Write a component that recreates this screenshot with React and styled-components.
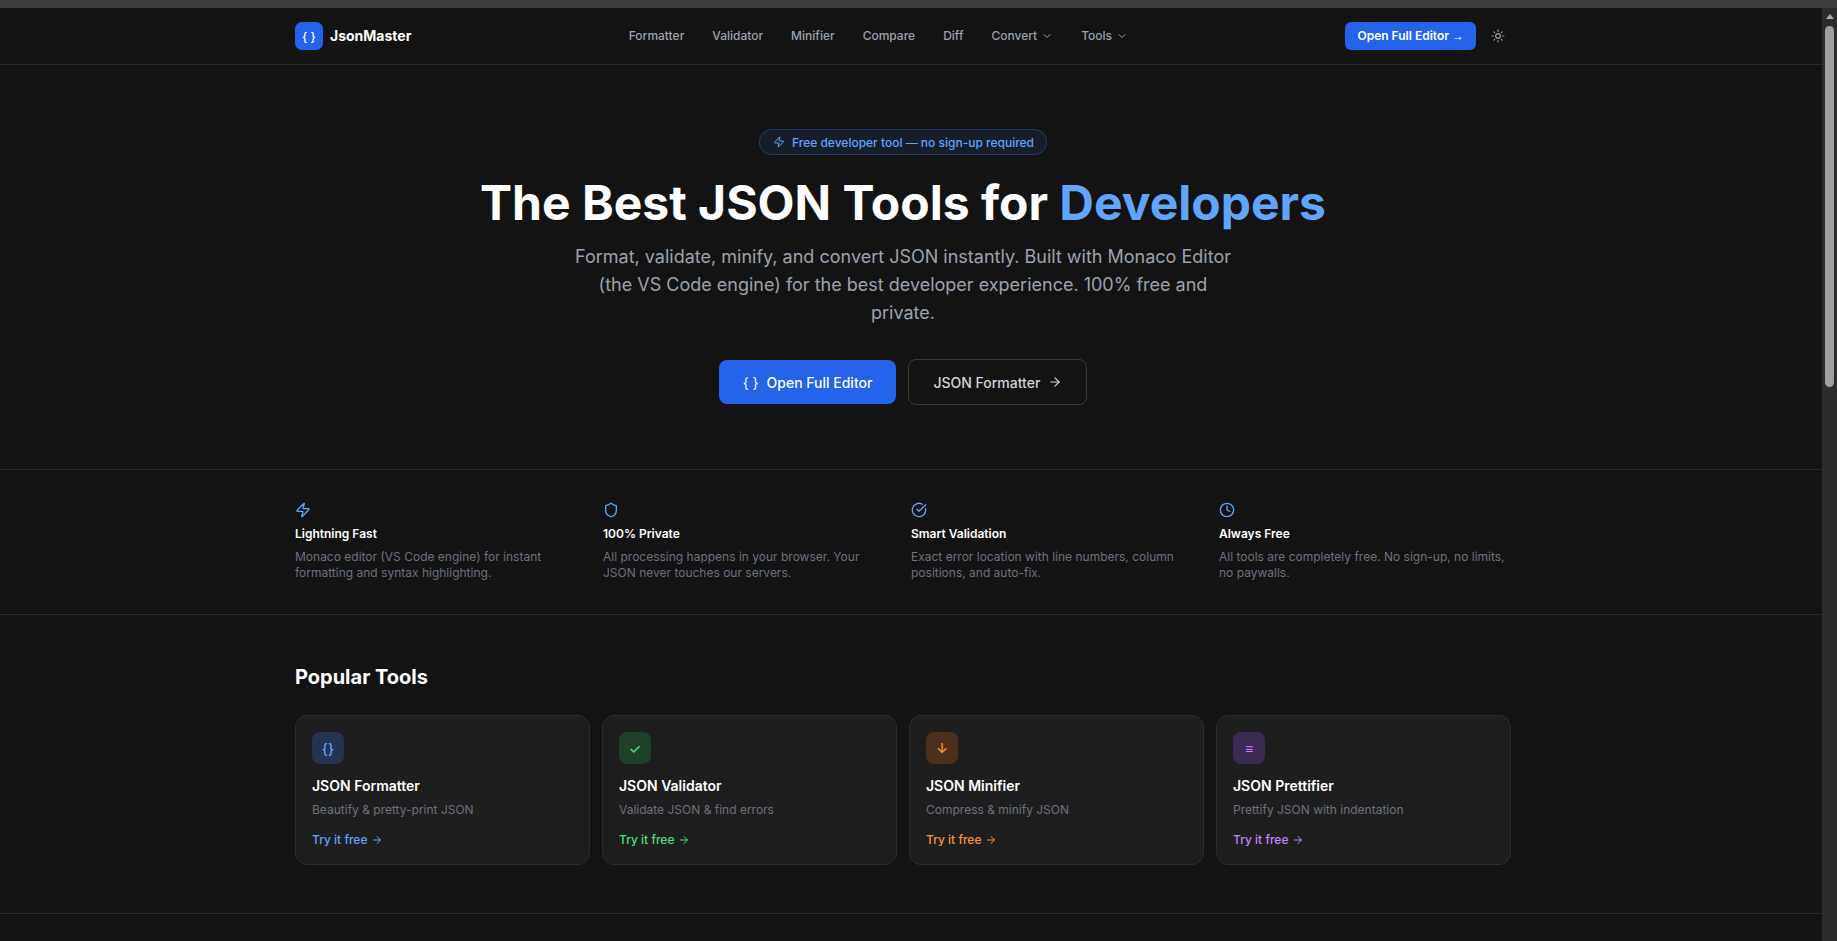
import React from 'react';
import styled, { createGlobalStyle } from 'styled-components';
import { ArrowRight, ChevronDown, CircleCheckBig, Clock, Shield, Sun, Zap } from 'lucide-react';

const GlobalStyle = createGlobalStyle`
    html, body {
        margin: 0;
        height: 100%;
        overflow: hidden;
        background: #131313;
    }

    body {
        font-family: Inter, "Noto Sans", sans-serif;
        color: #ffffff;
    }

    * {
        box-sizing: border-box;
    }
`;

const BrowserFrame = styled.div`
    width: 1837px;
    height: 941px;
    display: flex;
    flex-direction: column;
    overflow: hidden;
`;

const TopStrip = styled.div`
    height: 8px;
    flex-shrink: 0;
    background: #3c3c41;
`;

const Viewport = styled.div`
    flex: 1;
    display: flex;
    min-height: 0;
`;

const Page = styled.div`
    flex: 1;
    min-width: 0;
    background: #131313;
`;

const ScrollTrack = styled.div`
    width: 15px;
    flex-shrink: 0;
    display: flex;
    flex-direction: column;
    align-items: center;
    padding-top: 6px;
    background: #2b2b2b;
`;

const ScrollArrow = styled.div`
    width: 0;
    height: 0;
    border-left: 4.5px solid transparent;
    border-right: 4.5px solid transparent;
    border-bottom: 5px solid #a8a8a8;
`;

const ScrollThumb = styled.div`
    width: 9px;
    height: 361px;
    margin-top: 7px;
    border-radius: 5px;
    background: #9f9f9f;
`;

const Container = styled.div`
    width: 1216px;
    margin-left: 295px;
`;

const Header = styled.header`
    height: 57px;
    border-bottom: 1px solid #2a2a2a;
`;

const HeaderInner = styled(Container)`
    height: 56px;
    display: flex;
    align-items: center;
    justify-content: space-between;
`;

const Brand = styled.div`
    display: flex;
    align-items: center;
    gap: 7px;
`;

const BrandMark = styled.div`
    width: 28px;
    height: 28px;
    display: flex;
    align-items: center;
    justify-content: center;
    border-radius: 7px;
    background: #2563eb;
    font-size: 12px;
    font-weight: 500;
    color: #ffffff;
`;

const BrandName = styled.span`
    font-size: 14px;
    line-height: 20px;
    font-weight: 700;
    color: #ffffff;
`;

const Nav = styled.nav`
    display: flex;
    align-items: center;
    gap: 4px;
`;

const NavLink = styled.a`
    display: flex;
    align-items: center;
    gap: 4px;
    padding: 0 12px;
    font-size: 12px;
    line-height: 16px;
    font-weight: 500;
    color: #9ca3af;
`;

const HeaderActions = styled.div`
    display: flex;
    align-items: center;
    gap: 9px;
`;

const EditorLink = styled.a`
    height: 28px;
    display: flex;
    align-items: center;
    gap: 3px;
    padding: 0 12px;
    border-radius: 6px;
    background: #2563eb;
    font-size: 12px;
    line-height: 16px;
    font-weight: 600;
    color: #ffffff;
`;

const EditorArrow = styled.span`
    font-family: "Liberation Sans", sans-serif;
    font-weight: 400;
`;

const ThemeToggle = styled.button`
    display: flex;
    padding: 6px;
    border: 0;
    background: transparent;
    color: #9ca3af;
`;

const Hero = styled.section`
    padding: 64px 0;
    text-align: center;
    border-bottom: 1px solid #2a2a2a;
`;

const HeroInner = styled(Container)`
    display: flex;
    flex-direction: column;
    align-items: center;
`;

const Pill = styled.div`
    height: 26px;
    display: flex;
    align-items: center;
    gap: 7px;
    padding: 0 12px 0 13px;
    margin-bottom: 24px;
    border: 1px solid rgba(59, 130, 246, 0.3);
    border-radius: 13px;
    background: rgba(59, 130, 246, 0.1);
    font-size: 12px;
    font-weight: 500;
    color: #60a5fa;
`;

const Title = styled.h1`
    margin: 0 0 16px;
    font-size: 48px;
    line-height: 48px;
    font-weight: 700;
    color: #ffffff;
`;

const Accent = styled.span`
    color: #60a5fa;
`;

const Lead = styled.p`
    width: 672px;
    margin: 0 0 32px;
    font-size: 18px;
    line-height: 28px;
    color: #9ca3af;
`;

const HeroActions = styled.div`
    display: flex;
    align-items: center;
    gap: 12px;
`;

const PrimaryButton = styled.a`
    height: 44px;
    display: flex;
    align-items: center;
    gap: 8px;
    padding: 0 24px;
    border-radius: 8px;
    background: #2563eb;
    font-size: 14px;
    font-weight: 500;
    color: #ffffff;
`;

const BraceMark = styled.span`
    font-weight: 400;
`;

const SecondaryButton = styled.a`
    height: 46px;
    display: flex;
    align-items: center;
    gap: 8px;
    padding: 0 24px;
    border: 1px solid #3a3a3a;
    border-radius: 8px;
    font-size: 14px;
    font-weight: 500;
    color: #d1d5db;
`;

const Features = styled.section`
    height: 145px;
    padding-top: 32px;
    border-bottom: 1px solid #2a2a2a;
`;

const FeatureGrid = styled(Container)`
    display: grid;
    grid-template-columns: repeat(4, 1fr);
    gap: 16px;
`;

const Feature = styled.div`
    display: flex;
    flex-direction: column;
    color: #60a5fa;
`;

const FeatureTitle = styled.h3`
    margin: 8px 0 7px;
    font-size: 12px;
    line-height: 16px;
    font-weight: 600;
    color: #ffffff;
`;

const FeatureText = styled.p`
    margin: 0;
    font-size: 12px;
    line-height: 16px;
    color: #6b7280;
`;

const Tools = styled.section`
    padding: 48px 0;
    border-bottom: 1px solid #2a2a2a;
`;

const SectionTitle = styled.h2`
    margin: 0 0 24px;
    font-size: 20px;
    line-height: 28px;
    font-weight: 700;
    color: #ffffff;
`;

const ToolGrid = styled.div`
    display: grid;
    grid-template-columns: repeat(4, 1fr);
    gap: 12px;
`;

const ToolCard = styled.a`
    height: 150px;
    padding: 16px;
    display: flex;
    flex-direction: column;
    align-items: flex-start;
    border: 1px solid #2c2c2c;
    border-radius: 12px;
    background: #1e1e1e;
`;

const ToolIcon = styled.div`
    width: 32px;
    height: 32px;
    display: flex;
    align-items: center;
    justify-content: center;
    margin-bottom: 12px;
    border-radius: 8px;
    background: ${(p) => p.$tint};
    font-size: 14px;
    font-weight: 500;
    color: ${(p) => p.$color};
`;

const ToolName = styled.h3`
    margin: 0 0 6px;
    font-size: 14px;
    line-height: 20px;
    font-weight: 600;
    color: #ffffff;
`;

const ToolText = styled.p`
    margin: 0 0 14px;
    font-size: 12px;
    line-height: 16px;
    color: #6b7280;
`;

const TryLink = styled.span`
    display: flex;
    align-items: center;
    gap: 4px;
    font-size: 12px;
    line-height: 16px;
    font-weight: 500;
    color: ${(p) => p.$color};
`;

const navItems = [
    { label: 'Formatter' },
    { label: 'Validator' },
    { label: 'Minifier' },
    { label: 'Compare' },
    { label: 'Diff' },
    { label: 'Convert', menu: true },
    { label: 'Tools', menu: true },
];

const features = [
    { icon: Zap, title: 'Lightning Fast', text: 'Monaco editor (VS Code engine) for instant formatting and syntax highlighting.' },
    { icon: Shield, title: '100% Private', text: 'All processing happens in your browser. Your JSON never touches our servers.' },
    { icon: CircleCheckBig, title: 'Smart Validation', text: 'Exact error location with line numbers, column positions, and auto-fix.' },
    { icon: Clock, title: 'Always Free', text: 'All tools are completely free. No sign-up, no limits, no paywalls.' },
];

const tools = [
    { glyph: '{}', name: 'JSON Formatter', text: 'Beautify & pretty-print JSON', color: '#60a5fa', tint: '#24334f' },
    { glyph: '✓', name: 'JSON Validator', text: 'Validate JSON & find errors', color: '#4ade80', tint: '#1f4029' },
    { glyph: '↓', name: 'JSON Minifier', text: 'Compress & minify JSON', color: '#fb923c', tint: '#4d301c' },
    { glyph: '≡', name: 'JSON Prettifier', text: 'Prettify JSON with indentation', color: '#c084fc', tint: '#3b2a52' },
];

export default function App() {
    return (
        <>
            <GlobalStyle />
            <BrowserFrame>
                <TopStrip />
                <Viewport>
                    <Page>
                        <Header>
                            <HeaderInner>
                                <Brand>
                                    <BrandMark>{'{ }'}</BrandMark>
                                    <BrandName>JsonMaster</BrandName>
                                </Brand>
                                <Nav>
                                    {navItems.map((item) => (
                                        <NavLink key={item.label}>
                                            {item.label}
                                            {item.menu && <ChevronDown size={12} />}
                                        </NavLink>
                                    ))}
                                </Nav>
                                <HeaderActions>
                                    <EditorLink>Open Full Editor<EditorArrow>→</EditorArrow></EditorLink>
                                    <ThemeToggle><Sun size={14} /></ThemeToggle>
                                </HeaderActions>
                            </HeaderInner>
                        </Header>

                        <Hero>
                            <HeroInner>
                                <Pill><Zap size={12} />Free developer tool — no sign-up required</Pill>
                                <Title>The Best JSON Tools for <Accent>Developers</Accent></Title>
                                <Lead>
                                    Format, validate, minify, and convert JSON instantly. Built with Monaco Editor
                                    (the VS Code engine) for the best developer experience. 100% free and private.
                                </Lead>
                                <HeroActions>
                                    <PrimaryButton><BraceMark>{'{ }'}</BraceMark>Open Full Editor</PrimaryButton>
                                    <SecondaryButton>JSON Formatter<ArrowRight size={14} /></SecondaryButton>
                                </HeroActions>
                            </HeroInner>
                        </Hero>

                        <Features>
                            <FeatureGrid>
                                {features.map((f) => (
                                    <Feature key={f.title}>
                                        <f.icon size={16} />
                                        <FeatureTitle>{f.title}</FeatureTitle>
                                        <FeatureText>{f.text}</FeatureText>
                                    </Feature>
                                ))}
                            </FeatureGrid>
                        </Features>

                        <Tools>
                            <Container>
                                <SectionTitle>Popular Tools</SectionTitle>
                                <ToolGrid>
                                    {tools.map((t) => (
                                        <ToolCard key={t.name}>
                                            <ToolIcon $tint={t.tint} $color={t.color}>{t.glyph}</ToolIcon>
                                            <ToolName>{t.name}</ToolName>
                                            <ToolText>{t.text}</ToolText>
                                            <TryLink $color={t.color}>Try it free<ArrowRight size={12} /></TryLink>
                                        </ToolCard>
                                    ))}
                                </ToolGrid>
                            </Container>
                        </Tools>
                    </Page>
                    <ScrollTrack>
                        <ScrollArrow />
                        <ScrollThumb />
                    </ScrollTrack>
                </Viewport>
            </BrowserFrame>
        </>
    );
}
